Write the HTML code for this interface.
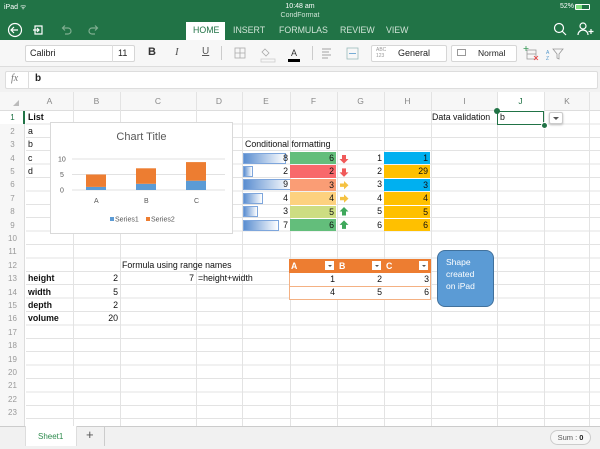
<!DOCTYPE html>
<html><head><meta charset="utf-8"><style>
*{margin:0;padding:0;box-sizing:border-box}
body{width:600px;height:449px;overflow:hidden;background:#fff;font-family:"Liberation Sans",sans-serif;position:relative}
.a{position:absolute;white-space:nowrap}
.c{position:absolute;height:13.4px;line-height:13.4px;font-size:8.8px;color:#111;white-space:nowrap}
.r{text-align:right}
.b{font-weight:bold}
.hd{position:absolute;top:92px;height:19px;line-height:19px;font-size:8.5px;color:#888;text-align:center}
.rn{position:absolute;left:0;width:25px;height:13.4px;line-height:13.4px;font-size:8px;color:#999;text-align:center}
.tab{position:absolute;top:25px;font-size:8.8px;color:#cfe3d6}
</style></head><body>
<div class="a" style="left:0;top:0;width:600px;height:40px;background:#217346"></div>
<div class="a" style="left:4px;top:3px;font-size:7px;color:#fff">iPad ᯤ</div>
<div class="a" style="left:0;width:600px;top:3px;font-size:7px;color:#fff;text-align:center">10:48 am</div>
<div class="a" style="left:0;width:600px;top:12px;font-size:7px;color:#cfe3d6;text-align:center">CondFormat</div>
<div class="a" style="left:560px;top:3px;font-size:7px;color:#fff">52%</div>
<div class="a" style="left:575px;top:4px;width:15px;height:6px;border:1px solid #fff;border-radius:1px"><div style="width:6px;height:4px;background:#7fe07f"></div></div>
<svg class="a" style="left:0;top:20px" width="110" height="20"><g fill="none" stroke="#fff" stroke-width="1.2"><circle cx="15" cy="10" r="6.5"/><path d="M18 10h-6M14 7l-3 3 3 3"/><path d="M35 6h7v8h-7zM33 10h6M37 8l2 2-2 2"/></g><g fill="none" stroke="#7fae90" stroke-width="1.2"><path d="M63 8h5a3 3 0 0 1 0 6h-3M65 5.5l-2.5 2.5 2.5 2.5"/><path d="M97 8h-5a3 3 0 0 0 0 6h3M95 5.5l2.5 2.5-2.5 2.5"/></g></svg>
<div class="a" style="left:186px;top:22px;width:39px;height:18px;background:#fff"></div>
<div class="tab" style="left:193px;color:#217346">HOME</div>
<div class="tab" style="left:233px">INSERT</div>
<div class="tab" style="left:279px">FORMULAS</div>
<div class="tab" style="left:340px">REVIEW</div>
<div class="tab" style="left:386px">VIEW</div>
<svg class="a" style="left:548px;top:20px" width="52" height="20"><g fill="none" stroke="#fff" stroke-width="1.2"><circle cx="11" cy="8" r="4.5"/><path d="M14 11l4 4"/><circle cx="35" cy="6" r="3"/><path d="M30 15a5 5 0 0 1 10 0M43 9v5M40.5 11.5h5"/></g></svg>
<div class="a" style="left:0;top:40px;width:600px;height:27px;background:#f7f7f7;border-bottom:1px solid #ddd"></div>
<div class="a" style="left:25px;top:45px;width:110px;height:17px;background:#fff;border:1px solid #d6d6d6;border-radius:2px"></div>
<div class="a" style="left:112px;top:45px;width:1px;height:17px;background:#ddd"></div>
<div class="a" style="left:30px;top:48px;font-size:9px;color:#222">Calibri</div>
<div class="a" style="left:118px;top:48px;font-size:9px;color:#222">11</div>
<div class="a" style="left:148px;top:46px;font-size:11px;font-weight:bold;color:#333">B</div>
<div class="a" style="left:175px;top:46px;font-size:11px;font-style:italic;font-family:'Liberation Serif',serif;color:#555">I</div>
<div class="a" style="left:202px;top:46px;font-size:10px;text-decoration:underline;color:#555">U</div>
<div class="a" style="left:221px;top:46px;width:1px;height:14px;background:#ccc"></div>
<div class="a" style="left:312px;top:46px;width:1px;height:14px;background:#ccc"></div>
<svg class="a" style="left:230px;top:44px" width="140" height="20"><g fill="none" stroke="#aaa" stroke-width="0.8"><rect x="5" y="4" width="10" height="10"/><path d="M10 4v10M5 9h10"/><path d="M35 5l4 4-3 3-4-4z"/><rect x="31" y="15" width="14" height="3" stroke="#ccc"/><path d="M92 5h9M92 8h7M92 11h9M92 14h6" stroke="#888"/><rect x="117" y="4" width="11" height="11" stroke="#9bb"/><path d="M119 9.5h7" stroke="#59c"/></g><text x="61" y="12" font-size="9" fill="#333" font-family="Liberation Sans">A</text><rect x="58" y="15" width="12" height="3" fill="#000"/></svg>
<div class="a" style="left:371px;top:45px;width:76px;height:17px;background:#fff;border:1px solid #d6d6d6;border-radius:2px"></div>
<div class="a" style="left:376px;top:47px;font-size:5px;color:#999;line-height:6px">ABC<br>123</div>
<div class="a" style="left:398px;top:48px;font-size:9px;color:#222">General</div>
<div class="a" style="left:451px;top:45px;width:66px;height:17px;background:#fff;border:1px solid #d6d6d6;border-radius:2px"></div>
<div class="a" style="left:457px;top:49px;width:9px;height:7px;border:1px solid #999"></div>
<div class="a" style="left:478px;top:48px;font-size:8.5px;color:#222">Normal</div>
<svg class="a" style="left:522px;top:44px" width="50" height="20"><g fill="none" stroke="#999" stroke-width="0.8"><rect x="5" y="6" width="9" height="9"/><path d="M5 10h9"/><path d="M4 2v5M1.5 4.5h5" stroke="#3a9a5a"/><path d="M12 12l4 4M16 12l-4 4" stroke="#e33"/><path d="M31 5h10l-4 5v5l-2-1v-4z"/></g><text x="24" y="10" font-size="5" fill="#59c">A</text><text x="24" y="16" font-size="5" fill="#59c">Z</text></svg>
<div class="a" style="left:0;top:67px;width:600px;height:25px;background:#f2f2f2"></div>
<div class="a" style="left:5px;top:71px;width:593px;height:18px;background:#fff;border:1px solid #ddd;border-radius:2px"></div>
<div class="a" style="left:28px;top:71px;width:1px;height:18px;background:#ddd"></div>
<div class="a" style="left:11px;top:73px;font-size:10px;font-style:italic;font-family:'Liberation Serif',serif;color:#777">fx</div>
<div class="a" style="left:35px;top:73px;font-size:10px;font-weight:bold;color:#222">b</div>
<div class="a" style="left:0;top:92px;width:600px;height:19px;background:#f7f7f7;border-bottom:1px solid #ddd"></div>
<div class="a" style="left:0;top:111px;width:25px;height:315px;background:#f7f7f7;border-right:1px solid #ddd"></div>
<div class="a" style="left:497px;top:92px;width:47px;height:19px;background:#fff"></div>
<div class="a" style="left:0;top:111px;width:25px;height:13.4px;background:#fff;border-right:2px solid #217346"></div>
<div class="a" style="left:13px;top:100px;width:0;height:0;border-left:6px solid transparent;border-bottom:6px solid #bbb"></div>
<div class="hd" style="left:26px;width:47px">A</div><div class="hd" style="left:73px;width:47px">B</div><div class="hd" style="left:120px;width:76px">C</div><div class="hd" style="left:196px;width:46px">D</div><div class="hd" style="left:242px;width:48px">E</div><div class="hd" style="left:290px;width:47px">F</div><div class="hd" style="left:337px;width:47px">G</div><div class="hd" style="left:384px;width:47px">H</div><div class="hd" style="left:431px;width:67px">I</div><div class="hd" style="left:497px;width:47px;color:#217346">J</div><div class="hd" style="left:544px;width:46px">K</div>
<div class="a" style="left:26px;top:111px;width:574px;height:315px;background-image:repeating-linear-gradient(to bottom,transparent 0,transparent 12.4px,#e3e3e3 12.4px,#e3e3e3 13.4px)"></div>
<div class="a" style="left:0;top:92px;width:600px;height:334px;pointer-events:none">
<div class="a" style="left:72.5px;top:0;width:1px;height:334px;background:#e3e3e3"></div><div class="a" style="left:119.5px;top:0;width:1px;height:334px;background:#e3e3e3"></div><div class="a" style="left:196px;top:0;width:1px;height:334px;background:#e3e3e3"></div><div class="a" style="left:242px;top:0;width:1px;height:334px;background:#e3e3e3"></div><div class="a" style="left:289.5px;top:0;width:1px;height:334px;background:#e3e3e3"></div><div class="a" style="left:336.5px;top:0;width:1px;height:334px;background:#e3e3e3"></div><div class="a" style="left:383.5px;top:0;width:1px;height:334px;background:#e3e3e3"></div><div class="a" style="left:430.5px;top:0;width:1px;height:334px;background:#e3e3e3"></div><div class="a" style="left:497px;top:0;width:1px;height:334px;background:#e3e3e3"></div><div class="a" style="left:544px;top:0;width:1px;height:334px;background:#e3e3e3"></div><div class="a" style="left:589px;top:0;width:1px;height:334px;background:#e3e3e3"></div>
</div>
<div class="rn" style="top:111.3px;color:#217346">1</div><div class="rn" style="top:124.7px">2</div><div class="rn" style="top:138.1px">3</div><div class="rn" style="top:151.5px">4</div><div class="rn" style="top:164.9px">5</div><div class="rn" style="top:178.3px">6</div><div class="rn" style="top:191.7px">7</div><div class="rn" style="top:205.1px">8</div><div class="rn" style="top:218.5px">9</div><div class="rn" style="top:231.9px">10</div><div class="rn" style="top:245.3px">11</div><div class="rn" style="top:258.7px">12</div><div class="rn" style="top:272.1px">13</div><div class="rn" style="top:285.5px">14</div><div class="rn" style="top:298.9px">15</div><div class="rn" style="top:312.3px">16</div><div class="rn" style="top:325.7px">17</div><div class="rn" style="top:339.1px">18</div><div class="rn" style="top:352.5px">19</div><div class="rn" style="top:365.9px">20</div><div class="rn" style="top:379.3px">21</div><div class="rn" style="top:392.7px">22</div><div class="rn" style="top:406.1px">23</div>
<div class="c b" style="left:28px;top:111.3px">List</div>
<div class="c" style="left:28px;top:124.7px">a</div><div class="c" style="left:28px;top:138.1px">b</div><div class="c" style="left:28px;top:151.5px">c</div><div class="c" style="left:28px;top:164.9px">d</div>
<div class="a" style="left:50px;top:122px;width:183px;height:112px;background:#fff;border:1px solid #d9d9d9"></div>
<div class="a" style="left:50px;width:183px;top:131px;text-align:center;font-size:11px;color:#595959">Chart Title</div>
<svg class="a" style="left:50px;top:122px" width="183" height="112" font-family="Liberation Sans" font-size="7" fill="#595959">
<g stroke="#d9d9d9" stroke-width="0.7"><path d="M22 37h153M22 52.5h153M22 68h153"/></g>
<text x="8" y="39.5">10</text><text x="10" y="55">5</text><text x="10" y="70.5">0</text>
<rect x="36" y="64.9" width="20" height="3.1" fill="#5b9bd5"/><rect x="36" y="52.5" width="20" height="12.4" fill="#ed7d31"/>
<rect x="86" y="61.8" width="20" height="6.2" fill="#5b9bd5"/><rect x="86" y="46.3" width="20" height="15.5" fill="#ed7d31"/>
<rect x="136" y="58.7" width="20" height="9.3" fill="#5b9bd5"/><rect x="136" y="40.1" width="20" height="18.6" fill="#ed7d31"/>
<text x="44" y="81">A</text><text x="94" y="81">B</text><text x="144" y="81">C</text>
<rect x="60" y="95" width="4" height="4" fill="#5b9bd5"/><text x="65" y="99.5">Series1</text>
<rect x="96" y="95" width="4" height="4" fill="#ed7d31"/><text x="101" y="99.5">Series2</text>
</svg>
<div class="c" style="left:245px;top:138.1px">Conditional formatting</div>
<div class="a" style="left:243px;top:152.5px;width:43px;height:11px;background:linear-gradient(to right,#5b8ed0,#fff);border:1px solid #7ea6dc"></div>
<div class="a" style="left:243px;top:165.9px;width:10px;height:11px;background:linear-gradient(to right,#5b8ed0,#fff);border:1px solid #7ea6dc"></div>
<div class="a" style="left:243px;top:179.3px;width:48px;height:11px;background:linear-gradient(to right,#5b8ed0,#fff);border:1px solid #7ea6dc"></div>
<div class="a" style="left:243px;top:192.7px;width:20px;height:11px;background:linear-gradient(to right,#5b8ed0,#fff);border:1px solid #7ea6dc"></div>
<div class="a" style="left:243px;top:206.1px;width:15px;height:11px;background:linear-gradient(to right,#5b8ed0,#fff);border:1px solid #7ea6dc"></div>
<div class="a" style="left:243px;top:219.5px;width:36px;height:11px;background:linear-gradient(to right,#5b8ed0,#fff);border:1px solid #7ea6dc"></div>
<div class="c r" style="left:243px;width:45px;top:151.5px">8</div><div class="c r" style="left:243px;width:45px;top:164.9px">2</div><div class="c r" style="left:243px;width:45px;top:178.3px">9</div><div class="c r" style="left:243px;width:45px;top:191.7px">4</div><div class="c r" style="left:243px;width:45px;top:205.1px">3</div><div class="c r" style="left:243px;width:45px;top:218.5px">7</div>
<div class="c r" style="left:290px;width:46px;top:152px;height:12.4px;background:#63be7b;padding-right:2px">6</div>
<div class="c r" style="left:290px;width:46px;top:165.4px;height:12.4px;background:#f8696b;padding-right:2px">2</div>
<div class="c r" style="left:290px;width:46px;top:178.8px;height:12.4px;background:#fa9d75;padding-right:2px">3</div>
<div class="c r" style="left:290px;width:46px;top:192.2px;height:12.4px;background:#fdd17f;padding-right:2px">4</div>
<div class="c r" style="left:290px;width:46px;top:205.6px;height:12.4px;background:#cddd82;padding-right:2px">5</div>
<div class="c r" style="left:290px;width:46px;top:219px;height:12.4px;background:#63be7b;padding-right:2px">6</div>
<svg class="a" style="left:338px;top:151.5px" width="12" height="81">
<path d="M4 3h4v4h2.5L6 11.5 1.5 7H4z" fill="#f05a5a"/><path d="M4 16.4h4v4h2.5L6 24.9 1.5 20.4H4z" fill="#f05a5a"/>
<path d="M2 31.5h4v-2.5l4.5 4.2-4.5 4.2v-2.5H2z" fill="#f5c242"/><path d="M2 44.9h4v-2.5l4.5 4.2-4.5 4.2v-2.5H2z" fill="#f5c242"/>
<path d="M6 55l4.5 4.5H8v4H4v-4H1.5z" fill="#3fa85b"/><path d="M6 68.4l4.5 4.5H8v4H4v-4H1.5z" fill="#3fa85b"/></svg>
<div class="c r" style="left:350px;width:32px;top:151.5px">1</div><div class="c r" style="left:350px;width:32px;top:164.9px">2</div><div class="c r" style="left:350px;width:32px;top:178.3px">3</div><div class="c r" style="left:350px;width:32px;top:191.7px">4</div><div class="c r" style="left:350px;width:32px;top:205.1px">5</div><div class="c r" style="left:350px;width:32px;top:218.5px">6</div>
<div class="c r" style="left:384px;width:46px;top:152px;height:12.4px;background:#00b0f0;padding-right:2px">1</div>
<div class="c r" style="left:384px;width:46px;top:165.4px;height:12.4px;background:#ffc000;padding-right:2px">29</div>
<div class="c r" style="left:384px;width:46px;top:178.8px;height:12.4px;background:#00b0f0;padding-right:2px">3</div>
<div class="c r" style="left:384px;width:46px;top:192.2px;height:12.4px;background:#ffc000;padding-right:2px">4</div>
<div class="c r" style="left:384px;width:46px;top:205.6px;height:12.4px;background:#ffc000;padding-right:2px">5</div>
<div class="c r" style="left:384px;width:46px;top:219px;height:12.4px;background:#ffc000;padding-right:2px">6</div>
<div class="c" style="left:432px;top:111.3px">Data validation</div>
<div class="a" style="left:497px;top:111px;width:47px;height:14px;border:1px solid #217346;background:#fff"></div>
<div class="c" style="left:500px;top:111.3px">b</div>
<div class="a" style="left:494px;top:108px;width:6px;height:6px;border-radius:50%;background:#217346"></div>
<div class="a" style="left:541px;top:122px;width:7px;height:7px;border-radius:50%;background:#217346;border:1px solid #fff"></div>
<div class="a" style="left:549px;top:112px;width:14px;height:12px;background:#fff;border:1px solid #ccc;border-radius:2px;box-shadow:0 1px 2px #bbb"></div>
<div class="a" style="left:553px;top:117px;width:0;height:0;border-left:3px solid transparent;border-right:3px solid transparent;border-top:3px solid #555"></div>
<div class="c b" style="left:28px;top:272.1px">height</div><div class="c b" style="left:28px;top:285.5px">width</div><div class="c b" style="left:28px;top:298.9px">depth</div><div class="c b" style="left:28px;top:312.3px">volume</div>
<div class="c r" style="left:74px;width:44px;top:272.1px">2</div><div class="c r" style="left:74px;width:44px;top:285.5px">5</div><div class="c r" style="left:74px;width:44px;top:298.9px">2</div><div class="c r" style="left:74px;width:44px;top:312.3px">20</div>
<div class="c" style="left:122px;top:258.7px">Formula using range names</div>
<div class="c r" style="left:150px;width:44px;top:272.1px">7</div>
<div class="c" style="left:198px;top:272.1px">=height+width</div>
<div class="a" style="left:289px;top:259px;width:142px;height:41px;border:1px solid #f4b183;background:#fff"></div>
<div class="a" style="left:289px;top:259px;width:142px;height:14px;background:#ed7d31"></div>
<div class="a" style="left:289px;top:286px;width:142px;height:1px;background:#f4b183"></div>
<div class="c b" style="left:291px;top:259.5px;color:#fff">A</div><div class="c b" style="left:339px;top:259.5px;color:#fff">B</div><div class="c b" style="left:386px;top:259.5px;color:#fff">C</div>
<div class="a" style="left:325px;top:261px;width:9px;height:9px;background:#fff"></div><div class="a" style="left:372px;top:261px;width:9px;height:9px;background:#fff"></div><div class="a" style="left:419px;top:261px;width:9px;height:9px;background:#fff"></div>
<div class="a" style="left:327.5px;top:264.5px;border-left:2px solid transparent;border-right:2px solid transparent;border-top:2.5px solid #555"></div><div class="a" style="left:374.5px;top:264.5px;border-left:2px solid transparent;border-right:2px solid transparent;border-top:2.5px solid #555"></div><div class="a" style="left:421.5px;top:264.5px;border-left:2px solid transparent;border-right:2px solid transparent;border-top:2.5px solid #555"></div>
<div class="c r" style="left:290px;width:45px;top:272.5px">1</div><div class="c r" style="left:337px;width:45px;top:272.5px">2</div><div class="c r" style="left:384px;width:45px;top:272.5px">3</div>
<div class="c r" style="left:290px;width:45px;top:286px">4</div><div class="c r" style="left:337px;width:45px;top:286px">5</div><div class="c r" style="left:384px;width:45px;top:286px">6</div>
<div class="a" style="left:437px;top:250px;width:57px;height:57px;background:#5b9bd5;border:1px solid #41719c;border-radius:8px"></div>
<div class="a" style="left:446px;top:256px;font-size:8.5px;line-height:12px;color:#fff">Shape<br>created<br>on iPad</div>
<div class="a" style="left:0;top:426px;width:600px;height:23px;background:#f1f1f1;border-top:1px solid #ccc"></div>
<div class="a" style="left:25px;top:426px;width:52px;height:20px;background:#fff;border-left:1px solid #ddd;border-right:1px solid #ddd"></div>
<div class="a" style="left:38px;top:432px;font-size:8px;color:#2e8b4e">Sheet1</div>
<div class="a" style="left:86px;top:427px;font-size:13px;color:#555">+</div>
<div class="a" style="left:104px;top:427px;width:1px;height:19px;background:#ccc"></div>
<div class="a" style="left:550px;top:430px;width:41px;height:15px;border:1px solid #ccc;border-radius:8px;background:#f7f7f7;font-size:7.5px;line-height:13px;text-align:center;color:#555">Sum : <b style="color:#222">0</b></div>
</body></html>
